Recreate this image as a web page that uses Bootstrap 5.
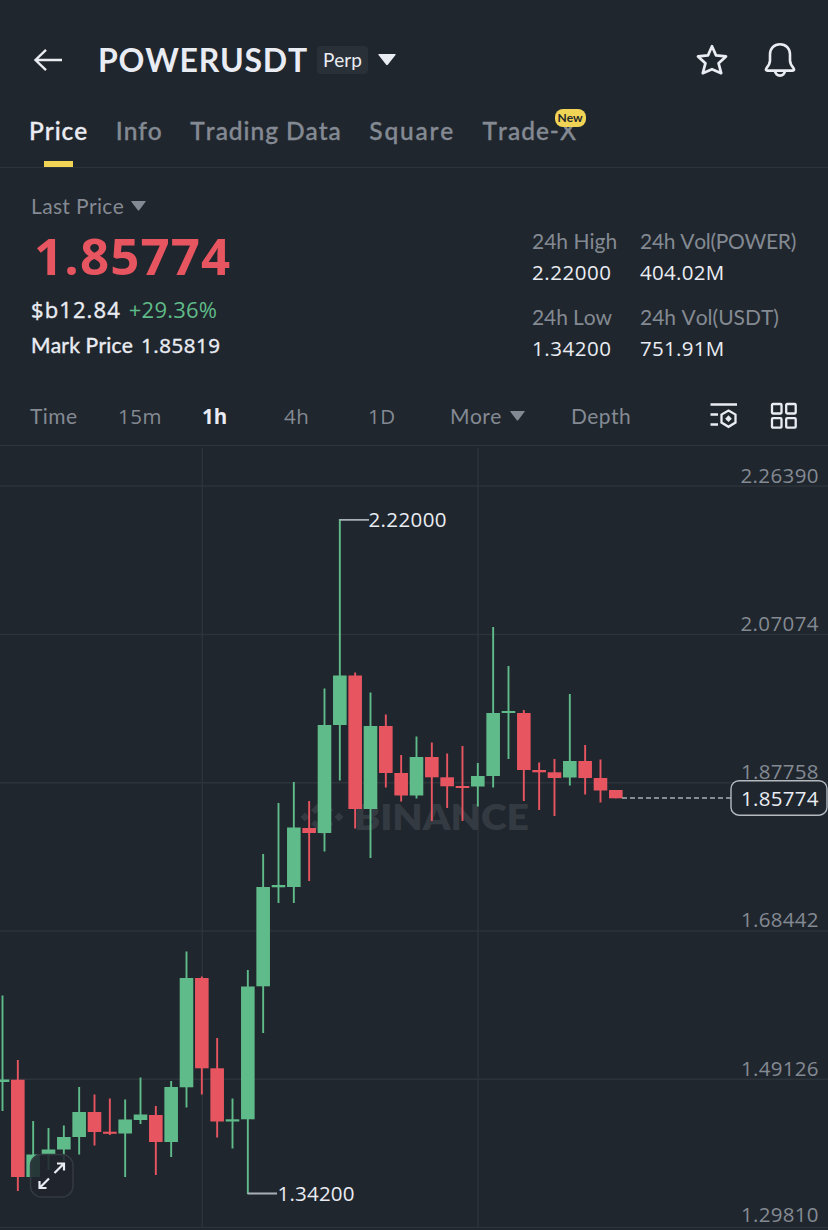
<!DOCTYPE html>
<html lang="en">
<head>
<meta charset="utf-8">
<meta name="viewport" content="width=device-width, initial-scale=1">
<title>POWERUSDT Perp</title>
<link href="https://cdn.jsdelivr.net/npm/bootstrap@5.3.0/dist/css/bootstrap.min.css" rel="stylesheet">
<style>
  :root { --bg:#20262d; --line:#2d333a; --fg:#eaecf3; --dim:#848a93; --up:#5fbb89; --down:#e75561; --gold:#f1d455; }
  body { background:var(--bg); color:var(--fg); font-family:Lato,"Liberation Sans",sans-serif; font-size:21px; line-height:1; overflow:hidden; font-kerning:none; }
  .screen { width:828px; height:1230px; overflow:hidden; }
  .dim { color:var(--dim); }
  .num { font-family:"Open Sans",Lato,sans-serif; font-size:20.5px; line-height:19px; padding-top:2px; letter-spacing:.55px; }
  .topbar { height:108px; padding:12px 31px 0 33px; }
  .pair { font-size:32px; font-weight:700; margin-left:35px; letter-spacing:.75px; }
  .perp { background:#2a3037; font-size:19px; border-radius:4px; padding:4px 6px 5px; margin:0 10px 0 9px; }
  .tabs { height:60px; padding:0 29px; gap:27.5px; border-bottom:1.5px solid var(--line); font-size:24.5px; font-weight:500; letter-spacing:.95px; }
  .tabs a { color:var(--dim); text-decoration:none; position:relative; padding-top:11px; height:59px; white-space:nowrap; -webkit-text-stroke:.35px; }
  .tabs a.active { color:var(--fg); }
  .tabs a.active::after { content:""; position:absolute; left:15px; bottom:0; width:29px; height:6px; background:var(--gold); }
  .new-tag { position:absolute; top:1px; left:72px; background:var(--gold); color:#24272b; border-radius:8px; font-size:12px; font-weight:700; padding:3px 0; height:18px; width:31px; text-align:center; letter-spacing:0; -webkit-text-stroke:0; }
  .quote { height:220px; padding:27px 0 0 31px; }
  .last { font-family:"Open Sans",Lato,sans-serif; color:var(--down); font-size:51px; font-weight:700; line-height:51px; margin:14px 0 0 3px; letter-spacing:1.1px; }
  .mid { -webkit-text-stroke:.4px; }
  .stats { display:grid; grid-template-columns:108px auto; row-gap:10px; padding-top:35px; width:296px; }
  .stats .gap-row { margin-top:14px; }
  .frames { display:grid; grid-template-columns:88px 84px 82px 84px 82px 121px 138px 61px auto; height:58px; padding:0 0 2px 30px; border-bottom:1.5px solid var(--line); align-items:center; letter-spacing:.4px; }
  .chart { display:block; margin-top:-1px; }
  .chart text { font-family:"Open Sans",Lato,sans-serif; font-size:20.5px; }
</style>
</head>
<body>
<div class="screen d-flex flex-column">
  <header class="topbar d-flex align-items-center flex-shrink-0">
    <svg width="30" height="24" viewBox="0 0 30 24" fill="none" stroke="#eaecf3" stroke-width="2.4"><path d="M29 12H2.5M13 1.8 2.5 12 13 22.2"/></svg>
    <span class="pair">POWERUSDT</span>
    <span class="perp">Perp</span>
    <svg width="18" height="12" viewBox="0 0 18 12" fill="#eaecf3"><path d="M1 0h16q1.3 0 .5 1L9.8 10.8q-.8.9-1.6 0L.5 1Q-.3 0 1 0z"/></svg>
    <svg class="ms-auto" width="34" height="34" viewBox="0 0 34 34" fill="none" stroke="#eaecf3" stroke-width="2.7" stroke-linejoin="round"><path d="M17 3.2 21 12.4 31 13.4 23.6 20.3 26.2 30.2 17 26.2 7.8 30.2 10.4 20.3 3 13.4 13 12.4z"/></svg>
    <svg style="margin-left:34px" width="34" height="36" viewBox="0 0 34 36" fill="none" stroke="#eaecf3" stroke-width="2.6" stroke-linejoin="round"><path d="M17 2.2c-6 0-10 4.4-10 10.2v6.2c0 3.2-1.2 4.8-3.5 7.6-1.2 1.6-.6 2.4 1 2.4h25c1.6 0 2.2-.8 1-2.4-2.3-2.8-3.5-4.4-3.5-7.6v-6.2C27 6.600 23 2.200 17 2.200zM11.800 28.600c.6 3.300 2.400 5 5.200 5s4.600-1.700 5.200-5"/></svg>
  </header>

  <nav class="tabs d-flex flex-shrink-0">
    <a href="#" class="active">Price</a>
    <a href="#">Info</a>
    <a href="#">Trading Data</a>
    <a href="#" style="letter-spacing:1.8px">Square</a>
    <a href="#">Trade-X<span class="new-tag">New</span></a>
  </nav>

  <section class="quote d-flex justify-content-between flex-shrink-0">
    <div>
      <div class="dim d-flex align-items-center"><span style="letter-spacing:.35px">Last Price</span>
        <svg style="margin-left:7px" width="15" height="10" viewBox="0 0 15 10" fill="#848a93"><path d="M.8 0h13.400q1 0 .4.800L8.200 9.200q-.7.700-1.400 0L.4.800Q-.2 0 .8 0z"/></svg></div>
      <div class="last">1.85774</div>
      <div class="d-flex" style="margin-top:17px;gap:8px"><span class="num mid" style="letter-spacing:1.1px;font-size:22px">$b12.84</span><span class="num" style="color:var(--up);letter-spacing:.2px;font-size:22px">+29.36%</span></div>
      <div class="mid d-flex" style="margin-top:15px;gap:8px"><span style="letter-spacing:.2px">Mark Price</span><span class="num">1.85819</span></div>
    </div>
    <div class="stats align-content-start">
      <span class="dim">24h High</span><span class="dim" style="letter-spacing:-.3px">24h Vol(POWER)</span>
      <span class="num">2.22000</span><span class="num" style="letter-spacing:.3px">404.02M</span>
      <span class="dim gap-row" style="letter-spacing:-.1px">24h Low</span><span class="dim gap-row">24h Vol(USDT)</span>
      <span class="num">1.34200</span><span class="num" style="letter-spacing:.3px">751.91M</span>
    </div>
  </section>

  <div class="frames dim flex-shrink-0">
    <span>Time</span><span class="num">15m</span><b class="num" style="color:var(--fg);letter-spacing:0">1h</b><span class="num">4h</span><span class="num">1D</span>
    <span class="d-flex align-items-center">More <svg class="ms-2" width="15" height="10" viewBox="0 0 15 10" fill="#848a93"><path d="M.8 0h13.400q1 0 .4.800L8.200 9.200q-.7.700-1.400 0L.4.800Q-.2 0 .8 0z"/></svg></span>
    <span>Depth</span>
    <svg width="30" height="28" viewBox="0 0 30 28" fill="none" stroke="#eaecf3" stroke-width="2.300"><path d="M1.500 2.500H28M1.500 12.500H9M1.500 22.500H9M19.500 8.600 26.500 12.600V20.600L19.500 24.800 12.500 20.600V12.600z"/><path d="M19.500 13.300 22.800 16.700 19.500 20 16.200 16.700z" fill="#eaecf3" stroke="none"/></svg>
    <svg width="28" height="28" viewBox="0 0 28 28" fill="none" stroke="#eaecf3" stroke-width="2.300"><rect x="2" y="2" width="9.500" height="9.500" rx="1"/><rect x="16.200" y="2" width="9.500" height="9.500" rx="1"/><rect x="2" y="16.200" width="9.500" height="9.500" rx="1"/><rect x="16.200" y="16.200" width="9.500" height="9.500" rx="1"/></svg>
  </div>

  <svg class="chart flex-shrink-0" width="828" height="785" viewBox="0 445 828 785">
    <g stroke="#2d333a" stroke-width="1.500"><path d="M0 486H828M0 634.500H828M0 782.700H828M0 931H828M0 1079.300H828M0 1227.500H828M202.300 448V1228M478 448V1228"/></g>
    <g fill="#343a41">
      <path d="M322 799 333 810 329 814 322 807 315 814 311 810zM322 835 333 824 329 820 322 827 315 820 311 824zM300.500 817 305 812.500 309.500 817 305 821.500zM334.500 817 339 812.500 343.500 817 339 821.500zM322 812.500 326.500 817 322 821.500 317.500 817z"/>
      <text x="354" y="830" style="font-family:Lato,sans-serif;font-size:36px;font-weight:800" textLength="175" lengthAdjust="spacingAndGlyphs">BINANCE</text>
    </g>
    <g id="candles"></g>
    <g stroke="#a9afb7" stroke-width="1.800" fill="none"><path d="M339.500 519.800H369M247.500 1193.500H277"/><path d="M622 798H731" stroke-dasharray="5 3" stroke-width="1.500"/></g>
    <g fill="#eaecf3"><text x="368.500" y="527.200" textLength="78">2.22000</text><text x="277.500" y="1201.200" textLength="77">1.34200</text></g>
    <g fill="#848a93">
      <text x="740.500" y="482.700" textLength="78">2.26390</text>
      <text x="740.500" y="631" textLength="78">2.07074</text>
      <text x="741" y="779" textLength="77.500">1.87758</text>
      <text x="741" y="927" textLength="77.500">1.68442</text>
      <text x="741" y="1075.700" textLength="77.500">1.49126</text>
      <text x="741" y="1222.200" textLength="77.500">1.29810</text>
    </g>
    <rect x="731" y="780.700" width="96" height="34.500" rx="8" fill="#20262d" stroke="#b4b9c0" stroke-width="1.400"/>
    <text x="741" y="805.700" textLength="77.500" fill="#eaecf3">1.85774</text>
    <rect x="30.500" y="1154.500" width="42.500" height="42.500" rx="11" fill="#20262d" fill-opacity=".88" stroke="#343a41" stroke-width="1.500"/>
    <path d="M54.500 1173 63.500 1164M57 1163.500H64V1170.500M49 1178.500 40 1187.500M39.500 1181V1188H46.500" fill="none" stroke="#eaecf3" stroke-width="2.200"/>
  </svg>
</div>
<script src="https://cdn.jsdelivr.net/npm/bootstrap@5.3.0/dist/js/bootstrap.bundle.min.js"></script>
<script>
  // direction, high, body top, body bottom, low
  const candles = [
    [1,995.5,1079.5,1082,1111],[0,1060,1079.7,1177,1191],[1,1121,1154.5,1177,1177],[1,1128,1149.5,1154,1170],
    [1,1125.5,1137,1149.5,1161],[1,1087,1112,1137,1154.5],[0,1094.5,1112,1132,1145.5],[0,1098.5,1131.7,1133.8,1135],
    [1,1099.5,1119.5,1133.5,1177],[1,1077.5,1114.5,1120,1124],[0,1106,1115,1142,1175],[1,1081,1087,1142,1157],
    [1,951.5,978,1087.3,1107.5],[0,976.5,978,1068.3,1094.5],[0,1038,1068.3,1121.5,1137.5],[1,1098.5,1119.3,1121.5,1148.5],
    [1,970,986.5,1119.3,1194],[1,854,887,986.3,1033],[1,803,885,887.3,903],[1,782,827.5,887,903],
    [0,801,828,833,881],[1,688.5,725,833,851.5],[1,519,675.5,725,780.5],[0,672.5,675.5,809,828.5],
    [1,692.5,726,809,858],[0,714.5,726,773,787.5],[0,755,773,795.5,801.5],[1,736.5,757,795.5,798.5],
    [0,742.5,757,777.3,821],[0,753.5,777.3,786.3,808],[0,746,786,788,821],[1,763,776,786.5,806.5],
    [1,627,713,776,787.5],[1,666,711,713,759],[0,710,713,770,801],[0,762.5,770,772.3,810],
    [0,759,772.3,778,816],[1,694,761,777.5,785.5],[0,745,761,778,794.5],[0,759.5,778,790.5,802.5],[0,790,790,798.3,798.3]
  ];
  document.getElementById('candles').innerHTML = candles.map(([up, high, top, bottom, low], i) => {
    const x = 2.5 + 15.333 * i, color = up ? 'var(--up)' : 'var(--down)';
    return `<g fill="${color}"><rect x="${x - .95}" y="${high}" width="1.9" height="${low - high}"/><rect x="${x - 6.8}" y="${top}" width="13.6" height="${bottom - top}"/></g>`;
  }).join('');
</script>
</body>
</html>
